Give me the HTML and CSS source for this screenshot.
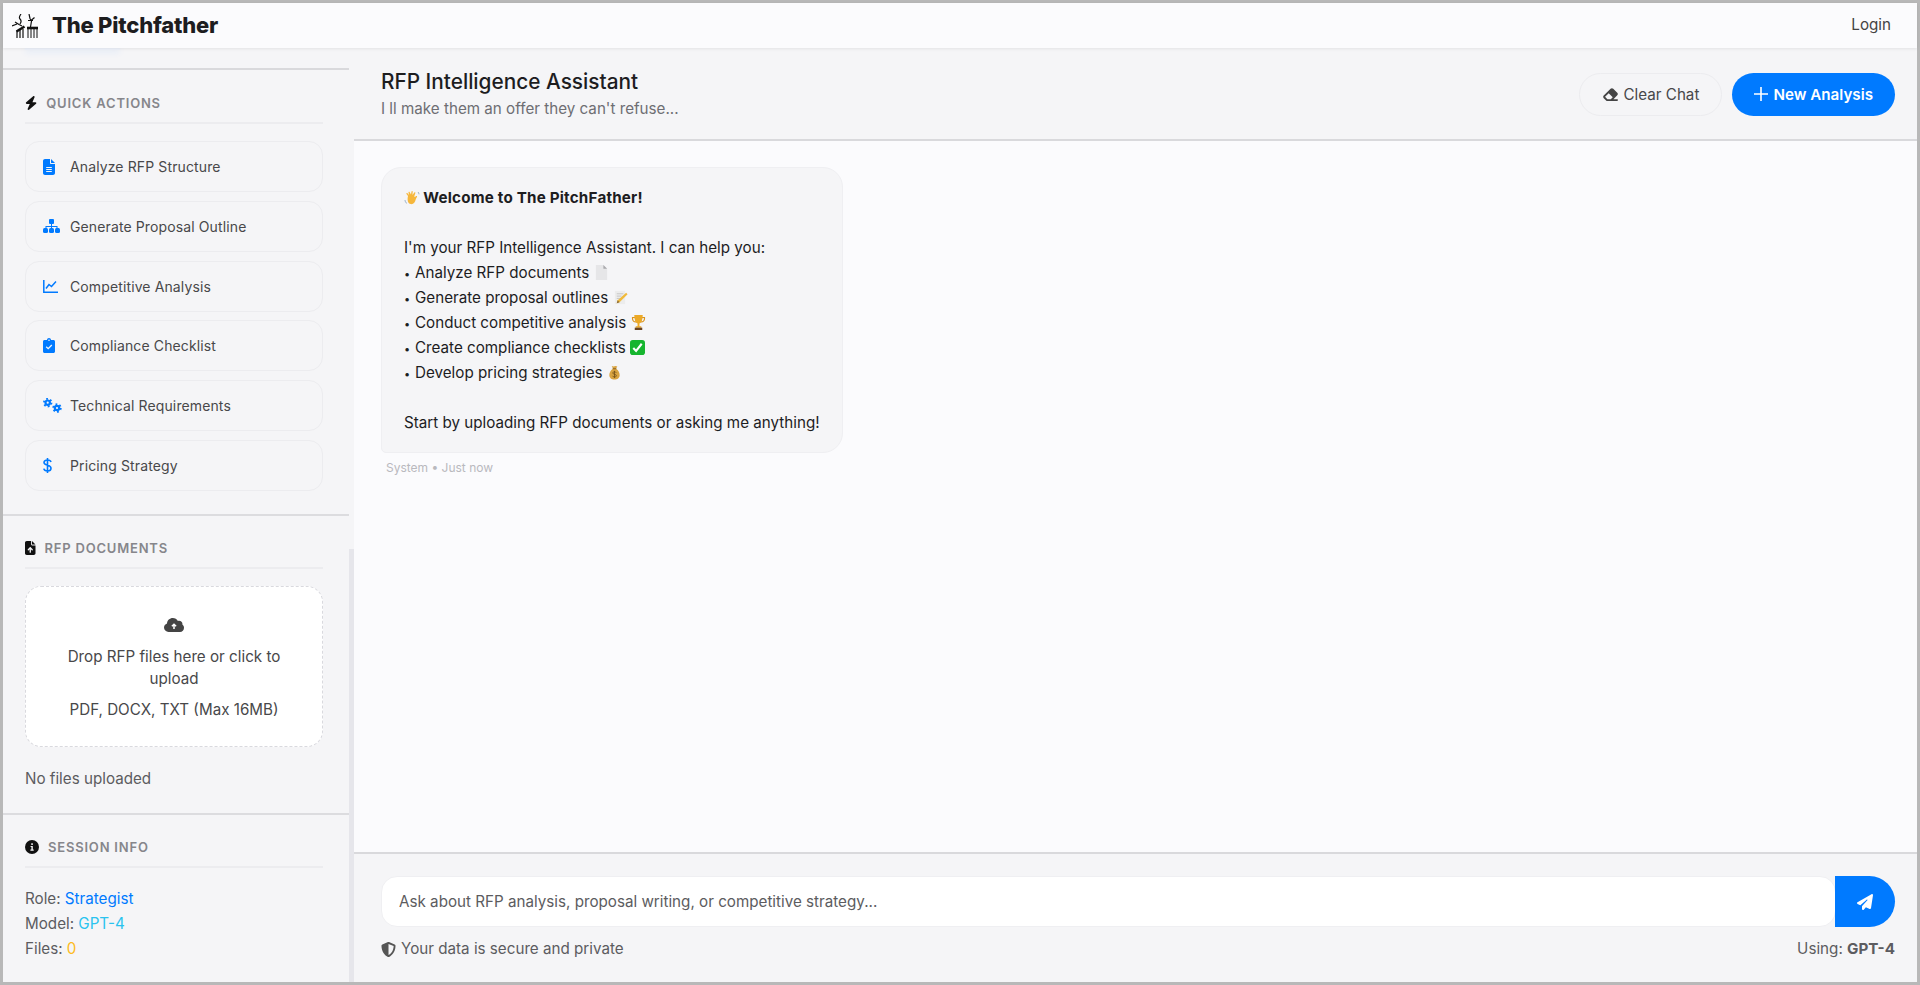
FILE: index.html
```html
<!DOCTYPE html>
<html lang="en">
<head>
  <meta charset="UTF-8" />
  <meta name="viewport" content="width=device-width, initial-scale=1.0"/>
  <title>The Pitchfather</title>
  <link rel="stylesheet" href="styles.css">
</head>
<body>
  <div class="frame">
    <!-- Top bar -->
    <nav class="navbar">
      <div class="brand">
        <svg class="logo" viewBox="0 0 26 24" fill="none" stroke="#111" stroke-width="1.200">
          <path d="M9 0c-1.500 2-2.500 3.500-1 5s1.500 3 0 5M3 8l4 2.500 3 1.500M0 12l5-2"/>
          <path d="M4.500 17.500l8-5" stroke-width="2.600"/>
          <path d="M5 17v7M8 16v8M11 15v9"/>
          <path d="M17 0l1 4.500 1.500 2.500-1 6M22.500 3.500L19 6.500M16 6.500h5"/>
          <path d="M15 14h11" stroke-width="2.600"/>
          <path d="M16 14v10M19 14v10M22 14v10M25 14v10" stroke-width="1"/>
        </svg>
        <span class="brand-name">The Pitchfather</span>
      </div>
      <a class="login">Login</a>
    </nav>

    <div class="layout">
      <!-- Sidebar -->
      <aside class="sidebar">
        <div class="sidebar-scrollbar"></div>
        <div class="sidebar-top"><div class="hidden-btn"></div></div>

        <section class="side-section actions-section">
          <h3 class="section-title">
            <svg class="title-icon" viewBox="0 0 448 512"><path d="M349.4 44.6c5.900-13.700 1.500-29.700-10.600-38.500s-28.600-8-39.900 1.800l-256 224c-10 8.800-13.600 22.900-8.900 35.300S50.700 288 64 288H175.500L98.600 467.400c-5.900 13.700-1.500 29.700 10.600 38.500s28.600 8 39.900-1.800l256-224c10-8.800 13.600-22.900 8.900-35.300s-16.600-20.700-30-20.700H272.500L349.400 44.600z"/></svg>
            Quick Actions
          </h3>
          <div class="action-list">
            <div class="action-item">
              <span class="action-icon"><svg width="12" height="16" viewBox="0 0 384 512"><path d="M64 0C28.700 0 0 28.700 0 64V448c0 35.300 28.700 64 64 64H320c35.300 0 64-28.700 64-64V160H256c-17.700 0-32-14.300-32-32V0H64zM256 0V128H384L256 0zM112 256H272c8.800 0 16 7.200 16 16s-7.200 16-16 16H112c-8.800 0-16-7.200-16-16s7.200-16 16-16zm0 64H272c8.800 0 16 7.200 16 16s-7.200 16-16 16H112c-8.800 0-16-7.200-16-16s7.200-16 16-16zm0 64H272c8.800 0 16 7.200 16 16s-7.200 16-16 16H112c-8.800 0-16-7.200-16-16s7.200-16 16-16z"/></svg></span>
              Analyze RFP Structure
            </div>
            <div class="action-item">
              <span class="action-icon"><svg width="17" height="14" viewBox="0 0 17 14"><rect x="6" y="0" width="5" height="5" rx="1"/><rect x="0" y="9" width="5" height="5" rx="1.500"/><rect x="6" y="9" width="5" height="5" rx="1.500"/><rect x="12" y="9" width="5" height="5" rx="1.500"/><path d="M8 4.500h1V7h5.500v3h-1V8H9v2H8V8H3.500v2h-1V7H8z"/></svg></span>
              Generate Proposal Outline
            </div>
            <div class="action-item">
              <span class="action-icon"><svg class="line-icon" width="15" height="13" viewBox="0 0 15 13" stroke-width="1.500"><path d="M.8 0v12.200H15"/><path d="M3 8.500l3-4 2.500 2 4.500-5"/></svg></span>
              Competitive Analysis
            </div>
            <div class="action-item">
              <span class="action-icon"><svg width="12" height="15" viewBox="0 0 12 15"><path d="M1.500 2H4c0-1.100.9-2 2-2s2 .9 2 2h2.500c.8 0 1.500.7 1.500 1.500v10c0 .8-.7 1.500-1.500 1.500h-9C.7 15 0 14.300 0 13.500v-10C0 2.700.7 2 1.500 2z"/><path d="M3.200 8.800l2 1.900 3.600-3.700" fill="none" stroke="#f5f5f7" stroke-width="1.300"/><circle cx="6" cy="2.200" r=".8" fill="#f5f5f7"/></svg></span>
              Compliance Checklist
            </div>
            <div class="action-item">
              <span class="action-icon"><svg class="line-icon" width="19" height="15" viewBox="0 0 19 15"><circle cx="4.700" cy="4.700" r="2.200" stroke-width="2.200"/><circle cx="4.700" cy="4.700" r="3.800" stroke-width="1.800" stroke-dasharray="1.800 2.180"/><circle cx="14" cy="10" r="2.200" stroke-width="2.200"/><circle cx="14" cy="10" r="3.800" stroke-width="1.800" stroke-dasharray="1.800 2.180"/></svg></span>
              Technical Requirements
            </div>
            <div class="action-item">
              <span class="action-icon"><svg class="line-icon" width="9" height="15" viewBox="0 0 9 15" stroke-width="1.600"><path d="M8 4c-.3-1.300-1.600-2-3.500-2S1 3 1 4.400c0 3.400 7 1.900 7 5.800C8 11.800 6.500 13 4.500 13S1.100 12 .8 10.600M4.500 0v15"/></svg></span>
              Pricing Strategy
            </div>
          </div>
        </section>

        <section class="side-section docs-section">
          <h3 class="section-title">
            <svg class="title-icon" viewBox="0 0 384 512"><path d="M64 0C28.700 0 0 28.700 0 64V448c0 35.300 28.700 64 64 64H320c35.300 0 64-28.700 64-64V160H256c-17.700 0-32-14.300-32-32V0H64zM256 0V128H384L256 0zM216 408c0 13.300-10.700 24-24 24s-24-10.700-24-24V305.900l-31 31c-9.400 9.400-24.600 9.400-33.900 0s-9.400-24.600 0-33.900l72-72c9.400-9.400 24.600-9.400 33.900 0l72 72c9.400 9.400 9.400 24.600 0 33.900s-24.600 9.400-33.900 0l-31-31V408z"/></svg>
            RFP Documents
          </h3>
          <div class="upload-box">
            <svg class="upload-icon" viewBox="0 0 20 14"><path d="M4.600 14C2 14 0 12 0 9.600 0 7.700 1.200 6 3 5.400 3.200 2.400 5.700 0 8.800 0c2.200 0 4.100 1.200 5.100 3 .4-.1.800-.2 1.200-.2 1.900 0 3.400 1.500 3.400 3.400 0 .2 0 .4-.1.600 1 .6 1.600 1.700 1.600 2.900 0 2.300-1.700 4.300-4 4.300z"/><path d="M10 11V6.500M7.900 8.300L10 6.200l2.100 2.100" fill="none" stroke="#fff" stroke-width="1.500"/></svg>
            <p class="upload-main">Drop RFP files here or click to upload</p>
            <p class="upload-sub">PDF, DOCX, TXT (Max 16MB)</p>
          </div>
          <p class="file-note">No files uploaded</p>
        </section>

        <section class="side-section session-section">
          <h3 class="section-title">
            <svg class="title-icon" viewBox="0 0 14 14"><circle cx="7" cy="7" r="7"/><path d="M5.600 6h2.200v3.600h.9v1.100H5.400V9.600h1V7.100h-.8zM6.300 3.300h1.500v1.600H6.300z" fill="#f5f5f7"/></svg>
            Session Info
          </h3>
          <div class="session-row">Role: <span class="val-blue">Strategist</span></div>
          <div class="session-row">Model: <span class="val-cyan">GPT-4</span></div>
          <div class="session-row">Files: <span class="val-yellow">0</span></div>
        </section>
      </aside>

      <!-- Chat -->
      <main class="chat">
        <header class="chat-header">
          <div>
            <h1 class="chat-title">RFP Intelligence Assistant</h1>
            <p class="chat-sub">I ll make them an offer they can't refuse...</p>
          </div>
          <div class="chat-buttons">
            <button type="button" class="btn btn-ghost">
              <svg width="17" height="15" viewBox="0 0 576 512" fill="#444"><path d="M290.700 57.400L57.400 290.700c-25 25-25 65.500 0 90.500l80 80c12 12 28.300 18.700 45.300 18.700H288h9.400H512c17.700 0 32-14.300 32-32s-14.300-32-32-32H387.900L518.600 285.300c25-25 25-65.500 0-90.500L381.300 57.400c-25-25-65.500-25-90.600 0zM297.400 416H288l-105.400 0-80-80L227.300 211.300 364.700 348.700 297.400 416z"/></svg>
              Clear Chat
            </button>
            <button type="button" class="btn btn-primary">
              <svg width="14" height="14" viewBox="0 0 14 14" fill="none" stroke="#fff" stroke-width="1.600"><path d="M7 0v14M0 7h14"/></svg>
              New Analysis
            </button>
          </div>
        </header>

        <div class="messages">
          <div class="bubble">
            <div class="bubble-line">
              <svg class="emoji emoji-wave" viewBox="0 0 16 16"><path d="M4 6l-1.500-2c-.5-.7.500-1.400 1-.8L5 5l-.5-2.500c-.2-.8 1-1.100 1.200-.3L7 4.500l.5-3c.1-.8 1.300-.7 1.200.1L8.500 5l1.800-2.500c.5-.6 1.400 0 1 .7L10.200 6.500c.5 1 2-1 2.800-.4.600.5-1 2-1.300 3.500-.5 3-2.400 5-5 4.500C4 13.700 3 10 4 6z" fill="#f6b73c"/><path d="M1 10c0 1.500 1 3 2 3.500M14 2c.6.600 1 1.400 1 2.300" fill="none" stroke="#9fb4cc" stroke-width="1"/></svg>
              <strong>Welcome to The PitchFather!</strong>
            </div>
            <div class="bubble-line"></div>
            <div class="bubble-line">I'm your RFP Intelligence Assistant. I can help you:</div>
            <div class="bubble-line"><span class="dot">•</span>Analyze RFP documents
              <svg class="emoji" viewBox="0 0 16 16"><path d="M2 0h8l4 4v12H2z" fill="#e6e6e8"/><path d="M10 0l4 4h-4z" fill="#a9a9ad"/></svg>
            </div>
            <div class="bubble-line"><span class="dot">•</span>Generate proposal outlines
              <svg class="emoji" viewBox="0 0 16 16"><path d="M2 1h11v14H2z" fill="#ececec"/><path d="M4 4h7M4 6.500h5M4 9h4" stroke="#bbb" stroke-width=".8"/><path d="M14 3l1.500 1.500L7 13l-3 1 1-3z" fill="#f0b93a"/><path d="M5 11l-1 3 3-1z" fill="#8a6a3a"/></svg>
            </div>
            <div class="bubble-line"><span class="dot">•</span>Conduct competitive analysis
              <svg class="emoji" viewBox="0 0 16 16"><path d="M1 2h14v2c0 2.500-2 4-4 4H5C3 8 1 6.500 1 4zM2.300 3.200v1c0 1.500 1.200 2.600 2.700 2.800L4 3.200zM13.700 3.200H12L11 7c1.500-.2 2.700-1.300 2.700-2.800z" fill="#d9931e"/><path d="M3.500 0h9c0 5-1.500 8-3.500 9v3h2v1.500H5V12h2V9C5 8 3.500 5 3.500 0z" fill="#eca927"/><path d="M4 13.500h8V16H4z" fill="#6b4320"/></svg>
            </div>
            <div class="bubble-line"><span class="dot">•</span>Create compliance checklists
              <svg class="emoji" viewBox="0 0 16 16"><rect width="16" height="16" rx="3" fill="#16b52f"/><path d="M3.500 8.500l3 3.200L12.500 4" fill="none" stroke="#fff" stroke-width="2.200"/></svg>
            </div>
            <div class="bubble-line"><span class="dot">•</span>Develop pricing strategies
              <svg class="emoji" viewBox="0 0 16 16"><path d="M5 1l2 .7L9 1l2 .5L9.500 4c3 1.500 4 4.500 4 7 0 3-2.500 4.500-5.500 4.500S2.500 14 2.500 11c0-2.500 1-5.500 4-7z" fill="#d9a441"/><path d="M6 4h4" stroke="#8a5f1e"/><path d="M9.800 8.200C9.500 7.500 8.800 7.200 8 7.200c-1 0-1.800.5-1.800 1.400 0 1.800 3.800 1 3.800 2.800 0 .9-.9 1.400-2 1.400s-1.900-.5-2.100-1.300M8 6.200v7.600" fill="none" stroke="#6b4a14" stroke-width=".8"/></svg>
            </div>
            <div class="bubble-line"></div>
            <div class="bubble-line">Start by uploading RFP documents or asking me anything!</div>
          </div>
          <div class="message-meta">System • Just now</div>
        </div>

        <footer class="composer">
          <div class="input-row">
            <input class="chat-input" placeholder="Ask about RFP analysis, proposal writing, or competitive strategy...">
            <button type="button" class="send-btn">
              <svg width="16" height="16" viewBox="0 0 512 512" fill="#fff"><path d="M498.100 5.600c10.100 7 15.400 19.100 13.500 31.200l-64 416c-1.500 9.700-7.400 18.200-16 23s-18.900 5.400-28 1.600L284 427.700l-68.500 74.100c-8.900 9.700-22.900 12.900-35.200 8.100S160 493.200 160 480V396.400c0-4 1.500-7.800 4.200-10.700L331.800 202.800c5.800-6.300 5.600-16-.4-22s-15.700-6.400-22-.7L106 360.800 17.700 316.600C7.100 311.300 .3 300.700 0 288.900s5.900-22.800 16.100-28.700l448-256c10.700-6.100 23.900-5.500 34 1.400z"/></svg>
            </button>
          </div>
          <div class="composer-foot">
            <span class="secure">
              <svg width="15" height="15" viewBox="0 0 512 512" fill="#555"><path d="M466.500 83.700l-192-80a48.150 48.150 0 0 0-36.900 0l-192 80C27.700 91.100 16 108.600 16 128c0 198.500 114.500 335.700 221.500 380.300 11.800 4.900 25.100 4.900 36.900 0C360.100 472.600 496 349.300 496 128c0-19.400-11.700-36.900-29.500-44.300zM256.100 446.300l-.1-381 175.900 73.300c-3.300 151.400-82.100 261.100-175.800 307.700z"/></svg>
              Your data is secure and private
            </span>
            <span>Using: <strong>GPT-4</strong></span>
          </div>
        </footer>
      </main>
    </div>
  </div>
</body>
</html>
```

FILE: styles.css
```css
* {
  box-sizing: border-box;
  margin: 0;
  padding: 0;
  font-family: 'Inter', sans-serif;
}

body {
  background: #b8b8b8;
  height: 985px;
  overflow: hidden;
}

.frame {
  display: flex;
  flex-direction: column;
  height: 100%;
  margin: 0 3px;
  padding: 3px 0;
}

.navbar {
  display: flex;
  justify-content: space-between;
  align-items: center;
  flex: none;
  height: 45px;
  padding: 0 26px 2px 9px;
  background: #fbfbfd;
  box-shadow: 0 1px 3px rgba(0,0,0,0.08);
  position: relative;
  z-index: 2;
}

.brand {
  display: flex;
  align-items: center;
  gap: 14px;
}

.logo {
  width: 26px;
  height: 24px;
  margin-top: 3px;
}

.brand-name {
  font-size: 22px;
  font-weight: 800;
  color: #1d1d1f;
  letter-spacing: -0.2px;
}

.login {
  font-size: 15.2px;
  color: #444;
  margin-bottom: 1px;
}

.layout {
  display: flex;
  flex: 1;
  min-height: 0;
}

/* Sidebar */
.sidebar {
  width: 351px;
  flex: none;
  background: #f5f5f7;
  position: relative;
  overflow: hidden;
}

.sidebar-scrollbar {
  position: absolute;
  right: 0;
  top: 501px;
  bottom: 0;
  width: 5px;
  background: #e6e6eb;
}

.sidebar-top {
  height: 22px;
  margin-right: 5px;
  border-bottom: 2px solid #d9d9dc;
}

.hidden-btn {
  height: 2px;
  width: 95px;
  margin-left: 22px;
  background: #eef2fb;
  box-shadow: 0 2px 6px rgba(0,122,255,0.14);
}

.side-section {
  margin-right: 5px;
  padding: 0 26px 0 22px;
  border-bottom: 2px solid #dcdcdf;
}

.session-section {
  border-bottom: none;
}

.section-title {
  display: flex;
  align-items: center;
  gap: 9px;
  height: 38px;
  font-size: 13px;
  font-weight: 600;
  color: #86868b;
  letter-spacing: 0.8px;
  text-transform: uppercase;
  border-bottom: 2px solid #ececef;
  padding-bottom: 2px;
}

.title-icon {
  height: 14px;
  width: auto;
  fill: #111;
  flex: none;
}

.actions-section {
  padding-top: 16px;
  padding-bottom: 23px;
}

.action-list {
  display: flex;
  flex-direction: column;
  gap: 8.8px;
  margin-top: 17px;
}

.action-item {
  display: flex;
  align-items: center;
  height: 51px;
  padding-left: 17px;
  border: 1px solid #ececef;
  border-radius: 14px;
  font-size: 14px;
  letter-spacing: 0.12px;
  color: #48484a;
}

.action-icon {
  width: 27px;
  flex: none;
  display: flex;
  align-items: center;
}

.action-icon svg {
  fill: #007aff;
}

.action-icon .line-icon {
  fill: none;
  stroke: #007aff;
}

.docs-section {
  padding-top: 15px;
  padding-bottom: 23px;
}

.upload-box {
  display: flex;
  flex-direction: column;
  align-items: center;
  height: 161px;
  margin-top: 17px;
  padding: 31px 24px 0;
  background: #fff;
  border: 1px dashed #d9d9de;
  border-radius: 16px;
  text-align: center;
  font-size: 15.2px;
  color: #48484a;
}

.upload-icon {
  width: 20px;
  height: 14px;
  fill: #444;
  flex: none;
}

.upload-main {
  margin-top: 14px;
  line-height: 22px;
}

.upload-sub {
  margin-top: 9px;
  line-height: 22px;
}

.file-note {
  margin-top: 21px;
  font-size: 15.2px;
  line-height: 22px;
  color: #5c5c60;
}

.session-section {
  padding-top: 15px;
}

.session-section .section-title {
  margin-bottom: 18px;
}

.session-row {
  font-size: 15.2px;
  line-height: 25px;
  color: #5c5c60;
}

.val-blue { color: #007aff; }
.val-cyan { color: #2ac3ef; }
.val-yellow { color: #fdbb22; }

/* Chat */
.chat {
  flex: 1;
  min-width: 0;
  display: flex;
  flex-direction: column;
  background: #fbfbfd;
}

.chat-header {
  display: flex;
  justify-content: space-between;
  align-items: center;
  flex: none;
  height: 93px;
  padding: 0 22px 0 27px;
  background: #f5f5f7;
  border-bottom: 2px solid #d9d9dc;
}

.chat-title {
  font-size: 20.8px;
  font-weight: 500;
  line-height: 30px;
  margin-bottom: 2px;
  color: #1d1d1f;
}

.chat-sub {
  font-size: 15.2px;
  line-height: 20px;
  margin-bottom: 2px;
  color: #6e6e73;
}

.chat-buttons {
  display: flex;
  gap: 10px;
  margin-top: 1px;
}

.btn {
  display: flex;
  align-items: center;
  gap: 5px;
  height: 43px;
  padding: 0 22px;
  border-radius: 22px;
  font-size: 15.2px;
  cursor: pointer;
}

.btn-ghost {
  background: transparent;
  border: 1px solid #ececef;
  color: #48484a;
}

.btn-primary {
  background: #007aff;
  border: none;
  color: #fff;
  font-weight: 600;
}

.messages {
  flex: 1;
  min-height: 0;
  padding: 26px 27px;
}

.bubble {
  width: 462px;
  padding: 17px 22px 17px;
  background: #f5f5f7;
  border: 1px solid #efeff2;
  border-radius: 20px 20px 20px 5px;
  font-size: 15.2px;
  color: #1d1d1f;
}

.bubble-line {
  height: 25px;
  line-height: 25px;
  white-space: nowrap;
}

.bubble-line strong {
  font-weight: 700;
  letter-spacing: 0.2px;
}

.dot {
  display: inline-block;
  width: 11px;
  font-size: 11px;
}

.emoji {
  width: 15px;
  height: 15px;
  vertical-align: -2px;
}

.emoji-wave {
  width: 16px;
  height: 16px;
  margin-right: -1px;
  vertical-align: -3px;
}

.message-meta {
  margin-top: 7px;
  padding-left: 5px;
  font-size: 12px;
  color: #b9b9be;
}

.composer {
  flex: none;
  height: 130px;
  padding: 22px 22px 0 27px;
  background: #f5f5f7;
  border-top: 2px solid #d9d9dc;
}

.input-row {
  display: flex;
  height: 51px;
}

.chat-input {
  flex: 1;
  min-width: 0;
  padding: 0 17px;
  background: #fff;
  border: 1px solid #efeff2;
  border-radius: 16px;
  outline: none;
  font-size: 15.2px;
}

.chat-input::placeholder {
  color: #5c5c60;
  opacity: 1;
}

.send-btn {
  display: flex;
  align-items: center;
  justify-content: center;
  width: 60px;
  margin-left: -1px;
  background: #007aff;
  border: none;
  border-radius: 0 26px 26px 0;
}

.composer-foot {
  display: flex;
  justify-content: space-between;
  align-items: center;
  margin-top: 12px;
  font-size: 15.2px;
  line-height: 20px;
  color: #5c5c60;
}

.secure {
  display: flex;
  align-items: center;
  gap: 5px;
}

.composer-foot strong {
  font-weight: 700;
}
```
